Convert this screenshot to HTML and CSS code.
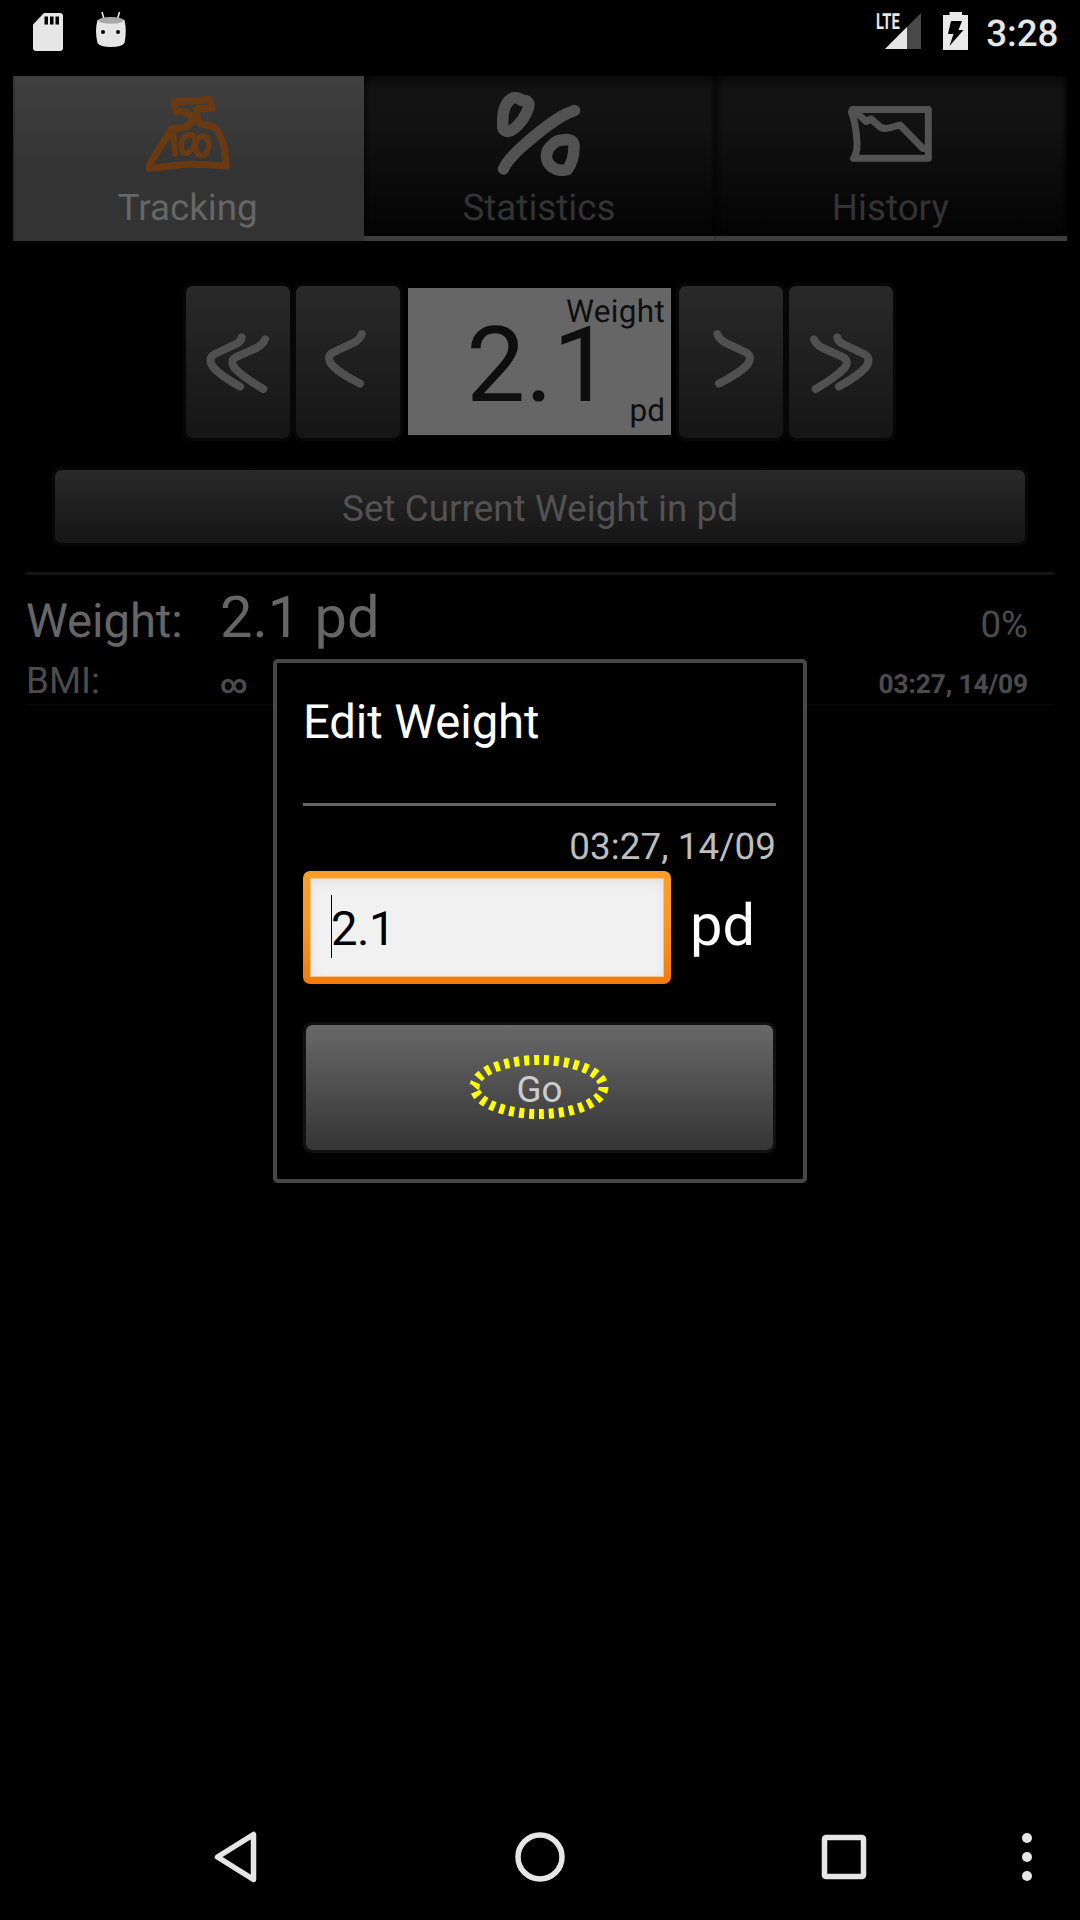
FILE: index.html
```html
<!DOCTYPE html>
<html lang="en">
<head>
<meta charset="utf-8">
<title>Weight tracker</title>
<link rel="stylesheet" href="styles.css">
</head>
<body>
<div class="screen">
  <header class="status">
    <div class="status-left">
      <svg class="sd" width="30" height="38" viewBox="0 0 30 38"><path fill="#e6e6e6" d="M11 0H27Q30 0 30 3V35Q30 38 27 38H3Q0 38 0 35V11.500Z"/><path d="M11.500 3.500h3.500v8h-3.500zM17 3.500h3.500v8h-3.500zM22.500 3.500h3.500v8h-3.500z"/></svg>
      <svg class="droid" width="32" height="37" viewBox="0 0 32 37"><path d="M7 1L9 8M24.500 1L22.500 8" stroke="#e6e6e6" stroke-width="1.600"/><path fill="#e6e6e6" d="M2.500 9Q16 4 29.500 9Q32 20 29.500 32Q27 36 16 36Q5 36 2.500 32Q-.5 20 2.500 9Z"/><ellipse cx="16" cy="9.300" rx="12.500" ry="3.400" fill="#a8a8a8"/><circle cx="8" cy="21" r="2"/><circle cx="23" cy="21" r="2"/></svg>
    </div>
    <div class="status-right">
      <div class="signal">
        <svg width="36" height="36" viewBox="0 0 36 36"><path d="M0 36L36 0V36Z" fill="#484848"/><path d="M0 36L22 14V36Z" fill="#e6e6e6"/></svg>
        <span class="lte">LTE</span>
      </div>
      <svg class="battery" width="25" height="38" viewBox="0 0 25 38"><path fill="#e9e9e9" d="M6.500 0H19V3H25V38H0V3H6.500Z"/><path d="M8 9H19L15.500 18H20.500L6.500 34L10.500 22H5Z"/></svg>
      <span class="clock">3:28</span>
    </div>
  </header>

  <nav class="tabs">
    <div class="tab active">
      <svg class="tab-icon scale-icon" viewBox="0 0 84 84">
        <path stroke-width="7" d="M28 9.700L47 9L63.300 7.300L66 16.500H51.500Q49 24 54 32L67 34.500Q72 36 78 55L80.500 74Q60 72 40.700 72.300L3.500 76.300L4 71.500L25.700 36.300Q43 37 45.500 29Q47 22 38 20Q34 19 29.700 20Z"/>
        <path stroke-width="5.500" d="M26 46L28 43L29 62M42 43C36 44 34 53 36 59C39 64 45 60 48 54C51 48 48 41 42 43ZM56 44C50 46 47 57 52 62C57 67 63 60 62.500 52C62 45 59 43 56 44Z"/>
      </svg>
      <span class="tab-label">Tracking</span>
    </div>
    <div class="tab">
      <svg class="tab-icon" viewBox="0 0 84 84"><path stroke-width="11.500" d="M16 6Q21 5 24.500 8.500Q30 7.500 32 12Q32 17 26 27Q17 39 11 39.500Q5 39 5.700 33Q5 11 16 6ZM6.500 77Q10 68 27 53Q53 30 70 21.500L77.500 18.500M55 53Q60 47.500 66 48L70 47.500Q77.500 48 77 55Q77 68 70.500 77.500Q62 80 55 75Q49 70 49.500 63Q50 57 55 53Z"/></svg>
      <span class="tab-label">Statistics</span>
    </div>
    <div class="tab">
      <svg class="tab-icon" viewBox="0 0 84 84"><path stroke-width="7" d="M4.300 17.500H80.300V66.300H5.500Q9.500 61 9 50Q8 32 3.500 20ZM7 19L18 29.500L23 27L31 34Q35 38 43 35.500L52 33L75 56.500H80"/></svg>
      <span class="tab-label">History</span>
    </div>
  </nav>

  <div class="stepper">
    <button class="btn step"><svg viewBox="0 0 104 152"><path d="M55.700 51.500Q55 55.500 50 58L29 68Q21 72 27 81Q35 90 54 100.500M79 53.500Q77 58 71.500 61.500L50 71Q43 75 49 82.500Q57 91 77.300 103"/></svg></button>
    <button class="btn step"><svg viewBox="0 0 104 152"><path d="M65.700 48Q64 53 58 56.500L37 66.500Q30 70.500 35.500 78.500Q43 87 64 97.500"/></svg></button>
    <div class="value">
      <span class="value-name">Weight</span>
      <span class="value-number">2.1</span>
      <span class="value-unit">pd</span>
    </div>
    <button class="btn step flip"><svg viewBox="0 0 104 152"><path d="M65.700 48Q64 53 58 56.500L37 66.500Q30 70.500 35.500 78.500Q43 87 64 97.500"/></svg></button>
    <button class="btn step flip"><svg viewBox="0 0 104 152"><path d="M55.700 51.500Q55 55.500 50 58L29 68Q21 72 27 81Q35 90 54 100.500M79 53.500Q77 58 71.500 61.500L50 71Q43 75 49 82.500Q57 91 77.300 103"/></svg></button>
  </div>

  <button class="btn set-weight">Set Current Weight in pd</button>

  <section class="summary">
    <div class="row row-weight"><span class="name">Weight:</span><span class="amount">2.1 pd</span><span class="percent">0%</span></div>
    <div class="row row-bmi"><span class="name">BMI:</span><span class="infinity">∞</span><span class="stamp">03:27, 14/09</span></div>
  </section>

  <footer class="navbar">
    <svg class="back" width="44" height="52" viewBox="0 0 44 52"><path d="M39.500 3.500V48.500L3.500 26Z"/></svg>
    <svg class="home" width="52" height="52" viewBox="0 0 52 52"><circle cx="26" cy="26" r="22"/></svg>
    <svg class="recent" width="46" height="46" viewBox="0 0 46 46"><rect x="3.500" y="3.500" width="39" height="39" rx="1.500"/></svg>
    <svg class="more" width="12" height="50" viewBox="0 0 12 50"><circle cx="6" cy="6" r="5"/><circle cx="6" cy="25" r="5"/><circle cx="6" cy="44" r="5"/></svg>
  </footer>

  <div class="dialog">
    <h1 class="dialog-title">Edit Weight</h1>
    <div class="dialog-stamp">03:27, 14/09</div>
    <div class="field">
      <div class="input"><div class="input-inner"><span class="caret"></span>2.1</div></div>
      <span class="unit">pd</span>
    </div>
    <button class="btn go">Go
      <svg class="ring" width="140" height="66" viewBox="0 0 140 66"><ellipse cx="70" cy="33" rx="64.500" ry="27" pathLength="300"/></svg>
    </button>
  </div>
</div>
</body>
</html>
```
FILE: styles.css
```css
* { box-sizing: border-box; }

body {
  margin: 0;
  background: #000;
  font-family: Roboto, sans-serif;
  text-rendering: geometricPrecision;
}

.screen {
  position: relative;
  width: 1080px;
  height: 1920px;
  display: flex;
  flex-direction: column;
  overflow: hidden;
}

svg { display: block; flex: none; }

/* status bar */
.status {
  height: 76px;
  padding: 0 21.500px 0 32.500px;
  display: flex;
  justify-content: space-between;
  align-items: flex-start;
}
.status-left, .status-right { display: flex; }
.sd { margin-top: 12.500px; }
.droid { margin: 10.500px 0 0 32.500px; }
.signal { position: relative; margin-top: 13px; }
.lte {
  position: absolute;
  left: -9px;
  top: -1px;
  color: #e6e6e6;
  font-size: 22px;
  line-height: 22px;
  font-weight: 700;
  transform: scaleX(.67);
  transform-origin: 0 0;
}
.battery { margin: 12px 0 0 22px; }
.clock {
  margin: 12px 0 0 18px;
  color: #e6e6e6;
  font-size: 36.750px;
  line-height: 44px;
  font-weight: 500;
}

/* tabs */
.tabs {
  margin: 0 13px;
  height: 165px;
  display: flex;
}
.tab {
  flex: 1;
  padding: 16px 2px 11px 0;
  display: flex;
  flex-direction: column;
  align-items: center;
  justify-content: space-between;
  color: #333;
  background:
    linear-gradient(#3c3c3c, #3c3c3c) bottom / 100% 5px no-repeat,
    linear-gradient(90deg, #0006, #0000 8px, #0000 calc(100% - 6px), #000a),
    linear-gradient(#090909, #131313 14px, #121212 30%, #030303 97%);
}
.tab.active {
  color: #666;
  background:
    linear-gradient(90deg, #0004, #0000 3px),
    linear-gradient(#404040, #333 60%, #333);
}
.tab-icon {
  width: 84px;
  height: 84px;
  fill: none;
  stroke: #525252;
  stroke-linejoin: round;
  stroke-linecap: round;
}
.scale-icon { stroke: #693a12; }
.tab-label { font-size: 36.750px; line-height: 44px; }

/* buttons */
.btn {
  display: block;
  padding: 0;
  font: inherit;
  border: 3px solid #070707;
  border-radius: 9px;
  background: linear-gradient(#292929, #151515) padding-box;
}

.stepper {
  margin-top: 42px;
  padding-left: 183px;
  height: 158px;
  display: flex;
  align-items: flex-start;
}
.step { width: 110px; height: 158px; }
.step svg {
  width: 104px;
  height: 152px;
  fill: none;
  stroke: #505050;
  stroke-width: 8;
  stroke-linecap: round;
}
.flip svg { transform: scaleX(-1); }
.value {
  margin: 5px 5px 0;
  width: 263px;
  height: 147px;
  padding: 0 6px;
  display: grid;
  grid-template-rows: 147px;
  background: #666;
  color: #0e0e0e;
  font-size: 31.500px;
}
.value > * { grid-area: 1 / 1; }
.value-name { justify-self: end; line-height: 47px; letter-spacing: .3px; }
.value-number { justify-self: center; font-size: 105px; line-height: 156px; margin-left: -1px; }
.value-unit { justify-self: end; align-self: end; line-height: 48px; }

.set-weight {
  margin: 26px 52px 0;
  height: 79px;
  color: #525252;
  font-size: 36.750px;
  line-height: 72px;
  letter-spacing: .07px;
  padding-top: 3px;
}

/* summary */
.summary {
  margin: 26px 26px 0;
  height: 133px;
  border-top: 3px solid #151515;
  border-bottom: 1px solid #0c0c0c;
}
.row {
  display: grid;
  grid-template-columns: 194px 1fr auto;
  align-items: baseline;
  padding-right: 26px;
}
.row-weight { color: #666; padding-top: 9px; }
.row-weight .name { font-size: 47.250px; letter-spacing: -.1px; }
.amount { font-size: 57.750px; line-height: 68px; }
.percent { font-size: 36.750px; color: #4c4c4c; }
.row-bmi { color: #4c4c4c; padding-top: 4px; }
.row-bmi .name { font-size: 36.750px; line-height: 50px; }
.infinity { font-size: 26.250px; font-weight: 700; }
.stamp { font-size: 26.250px; font-weight: 700; letter-spacing: -.1px; }

/* system navigation */
.navbar {
  margin-top: auto;
  height: 126px;
  display: flex;
  align-items: center;
  padding-left: 214px;
}
.navbar svg { fill: none; stroke: #e6e6e6; stroke-width: 5.500; stroke-linejoin: round; }
.home { margin-left: 256px; }
.recent { margin-left: 255px; }
.navbar .more { margin-left: 154px; fill: #e6e6e6; stroke: none; }

/* dialog over the dimmed page */
.dialog {
  position: absolute;
  left: 273px;
  top: 659px;
  width: 534px;
  height: 524px;
  padding: 0 27px 0 26px;
  border: 4px solid #484848;
  border-radius: 5px;
  background: #000;
}
.dialog-title {
  margin: 0;
  height: 143px;
  padding-top: 31px;
  border-bottom: 3px solid #666;
  color: #fff;
  font-size: 47.250px;
  line-height: 56px;
  font-weight: 400;
  letter-spacing: -.1px;
}
.dialog-stamp {
  height: 65px;
  padding: 16px 0 0;
  color: #bebebe;
  font-size: 36.750px;
  line-height: 50px;
  letter-spacing: .1px;
  text-align: right;
}
.field { display: flex; height: 113px; }
.input {
  width: 368px;
  padding: 7px;
  border-radius: 7px;
  background: linear-gradient(#ff9d28, #fb9826 40%, #f17a0b);
}
.input-inner {
  height: 99px;
  display: flex;
  padding-left: 20px;
  border: 1px solid #f8c48c;
  background: #f1f1f1;
  box-shadow: inset 0 4px 12px #0000000f;
  color: #000;
  font-size: 47.250px;
  line-height: 101px;
  letter-spacing: -.5px;
}
.caret { width: 1px; height: 63px; margin: 16px -1px 0 0; background: #000; }
.unit { margin-left: 19px; color: #fff; font-size: 57.750px; line-height: 110px; }
.go {
  position: relative;
  width: 473px;
  height: 131px;
  margin-top: 38px;
  border-color: #111;
  background: linear-gradient(#686868, #353535) padding-box;
  color: #ccc;
  font-size: 36.750px;
  line-height: 129px;
}
.ring {
  position: absolute;
  left: 162.500px;
  top: 29px;
  fill: none;
  stroke: #ff0;
  stroke-width: 10;
  stroke-dasharray: 5 5;
}
```
